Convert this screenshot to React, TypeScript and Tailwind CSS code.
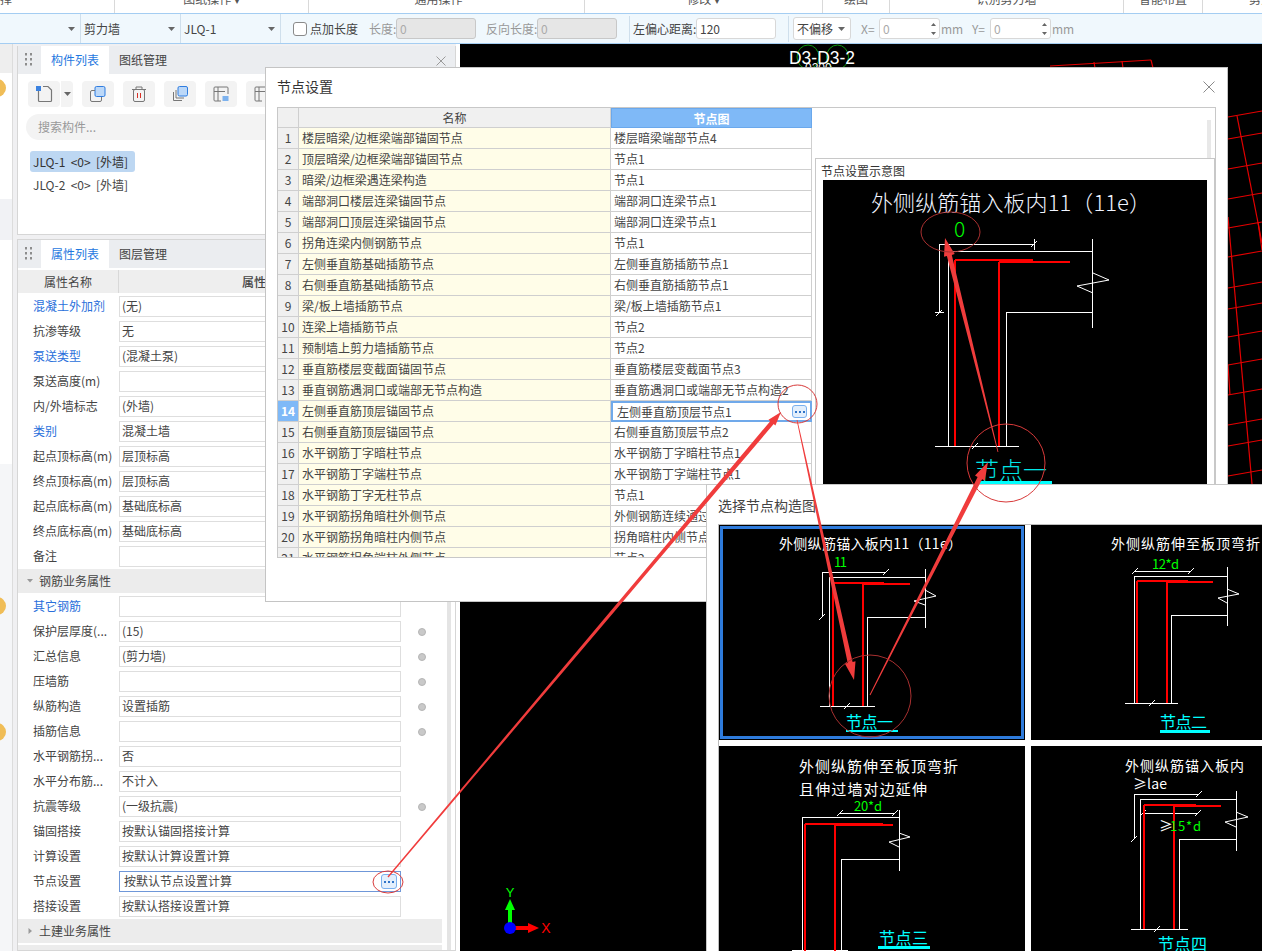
import React from "react";

const FONT = "font-['Noto_Sans_CJK_SC','Liberation_Sans',sans-serif]";
const CJK = "'Noto Sans CJK SC','Liberation Sans',sans-serif";

const NODE_ROWS: [string, string][] = [
  ["楼层暗梁/边框梁端部锚固节点", "楼层暗梁端部节点4"],
  ["顶层暗梁/边框梁端部锚固节点", "节点1"],
  ["暗梁/边框梁遇连梁构造", "节点1"],
  ["端部洞口楼层连梁锚固节点", "端部洞口连梁节点1"],
  ["端部洞口顶层连梁锚固节点", "端部洞口连梁节点1"],
  ["拐角连梁内侧钢筋节点", "节点1"],
  ["左侧垂直筋基础插筋节点", "左侧垂直筋插筋节点1"],
  ["右侧垂直筋基础插筋节点", "右侧垂直筋插筋节点1"],
  ["梁/板上墙插筋节点", "梁/板上墙插筋节点1"],
  ["连梁上墙插筋节点", "节点2"],
  ["预制墙上剪力墙插筋节点", "节点2"],
  ["垂直筋楼层变截面锚固节点", "垂直筋楼层变截面节点3"],
  ["垂直钢筋遇洞口或端部无节点构造", "垂直筋遇洞口或端部无节点构造2"],
  ["左侧垂直筋顶层锚固节点", "左侧垂直筋顶层节点1"],
  ["右侧垂直筋顶层锚固节点", "右侧垂直筋顶层节点2"],
  ["水平钢筋丁字暗柱节点", "水平钢筋丁字暗柱节点1"],
  ["水平钢筋丁字端柱节点", "水平钢筋丁字端柱节点1"],
  ["水平钢筋丁字无柱节点", "节点1"],
  ["水平钢筋拐角暗柱外侧节点", "外侧钢筋连续通过节点1"],
  ["水平钢筋拐角暗柱内侧节点", "拐角暗柱内侧节点1"],
  ["水平钢筋拐角端柱外侧节点", "节点2"],
];

type P = { label: string; value?: string; blue?: boolean; dot?: boolean; focus?: boolean };

const PROPS_A: P[] = [
  { label: "混凝土外加剂", value: "(无)", blue: true },
  { label: "抗渗等级", value: "无" },
  { label: "泵送类型", value: "(混凝土泵)", blue: true },
  { label: "泵送高度(m)" },
  { label: "内/外墙标志", value: "(外墙)" },
  { label: "类别", value: "混凝土墙", blue: true },
  { label: "起点顶标高(m)", value: "层顶标高" },
  { label: "终点顶标高(m)", value: "层顶标高" },
  { label: "起点底标高(m)", value: "基础底标高" },
  { label: "终点底标高(m)", value: "基础底标高" },
  { label: "备注" },
];

const PROPS_B: P[] = [
  { label: "其它钢筋", blue: true },
  { label: "保护层厚度(...", value: "(15)", dot: true },
  { label: "汇总信息", value: "(剪力墙)", dot: true },
  { label: "压墙筋", dot: true },
  { label: "纵筋构造", value: "设置插筋", dot: true },
  { label: "插筋信息", dot: true },
  { label: "水平钢筋拐...", value: "否" },
  { label: "水平分布筋...", value: "不计入" },
  { label: "抗震等级", value: "(一级抗震)", dot: true },
  { label: "锚固搭接", value: "按默认锚固搭接计算" },
  { label: "计算设置", value: "按默认计算设置计算" },
  { label: "节点设置", value: "按默认节点设置计算", focus: true },
  { label: "搭接设置", value: "按默认搭接设置计算" },
];

function DotsButton({ className }: { className: string }) {
  return (
    <span className={`flex items-center justify-center gap-[2px] rounded-[3px] border border-[#7ab0ee] bg-[#e3effc] ${className}`}>
      <i className="block w-[2px] h-[2px] bg-[#2f74c8]" />
      <i className="block w-[2px] h-[2px] bg-[#2f74c8]" />
      <i className="block w-[2px] h-[2px] bg-[#2f74c8]" />
    </span>
  );
}

function PropRow({ p }: { p: P }) {
  return (
    <div className="flex items-center h-[21px] mb-[4px]">
      <div className={`w-[101px] pl-[15px] pb-[2px] whitespace-nowrap text-[12px] leading-[19px] ${p.blue ? "text-[#2a6fdb]" : "text-[#444]"}`}>
        {p.label}
      </div>
      <div
        className={`flex items-center justify-between w-[282px] h-[21px] border text-[12px] leading-[19px] text-[#444] bg-white ${
          p.focus ? "border-[#6f97d8] pl-[4px] pr-[3px]" : "border-[#dedede] pl-[2px]"
        }`}
      >
        <span className="pb-[2px] whitespace-nowrap">{p.value ?? ""}</span>
        {p.focus && <DotsButton className="w-[16px] h-[15px]" />}
      </div>
      <div className="w-[41px] flex justify-center">
        {p.dot && <span className="block w-[8px] h-[8px] rounded-full bg-[#c9c9c9] border border-[#b5b5b5]" />}
      </div>
    </div>
  );
}

function Section({ label, open, className }: { label: string; open?: boolean; className: string }) {
  return (
    <div className={`flex items-center h-[24px] bg-[#ececec] text-[12px] text-[#444] ${className}`}>
      <svg width="21" height="10" viewBox="0 0 21 10" className="shrink-0">
        {open ? <path d="M9 3h6l-3 3.5z" fill="#999" /> : <path d="M10.5 2v6l3.5-3z" fill="#999" />}
      </svg>
      {label}
    </div>
  );
}

function Grip() {
  return (
    <svg width="7" height="14" viewBox="0 0 7 14" className="shrink-0">
      {[0, 5, 10].map((y) => (
        <g key={y} fill="#8d8d8d">
          <rect x="0" y={y} width="2" height="2.5" />
          <rect x="5" y={y} width="2" height="2.5" />
        </g>
      ))}
    </svg>
  );
}

function PanelHeader({ active, other, close }: { active: string; other: string; close?: boolean }) {
  return (
    <div className="flex items-stretch h-[28px] bg-[#ebedf0] text-[12px]">
      <div className="flex items-center w-[23px] pl-[7px]">
        <Grip />
      </div>
      <div className="flex items-center justify-center w-[68px] bg-white text-[#1f78e0]">{active}</div>
      <div className="flex items-center pl-[10px] text-[#444]">{other}</div>
      {close && (
        <svg width="10" height="10" viewBox="0 0 10 10" className="ml-auto mr-[9px] mt-[10px]">
          <path d="M.5.5l9 9M9.5.5l-9 9" stroke="#9a9a9a" strokeWidth="1" />
        </svg>
      )}
    </div>
  );
}

function ToolBtn({ children }: { children: React.ReactNode }) {
  return <div className="flex items-center justify-center w-[32px] h-[26px] rounded-[4px] bg-[#f3f3f3]">{children}</div>;
}

function TinyCaret({ className = "" }: { className?: string }) {
  return (
    <svg width="7" height="4" viewBox="0 0 7 4" className={className}>
      <path d="M0 0h7L3.5 4z" fill="#666" />
    </svg>
  );
}

function Spin() {
  return (
    <svg width="5" height="14" viewBox="0 0 5 14" className="shrink-0">
      <path d="M2.5 1L5 4H0zM2.5 13L0 10h5z" fill="#666" />
    </svg>
  );
}

function NumBox() {
  return (
    <div className="flex items-center justify-between w-[61px] h-[21px] ml-[1px] pl-[3px] pr-[3px] rounded-[3px] border border-[#d8d8d8] bg-white text-[#aaa]">
      0
      <Spin />
    </div>
  );
}

const Disabled = ({ w }: { w: string }) => (
  <div className={`h-[21px] rounded-[3px] border border-[#c8c8c8] bg-[#e6e6e6] pl-[3px] leading-[19px] text-[#aaa] ${w}`}>0</div>
);

/* ---------- CAD drawing helpers ---------- */
type Seg = [number, number, number, number];
type T = { x: number; y: number; s: string; size: number; fill: string; len?: number; w?: number };

function Tick({ x, y }: { x: number; y: number }) {
  return (
    <g stroke="#fff" strokeWidth="1" fill="none">
      <path d={`M${x - 3} ${y + 3}L${x + 3} ${y - 3}`} />
    </g>
  );
}

function Cad({
  box,
  white,
  red,
  redW = 2.5,
  ticks = [],
  zig,
  texts,
  under,
}: {
  box: [number, number, number, number];
  white: Seg[];
  red: Seg[];
  redW?: number;
  ticks?: [number, number][];
  zig: string;
  texts: T[];
  under?: [number, number, number, number];
}) {
  return (
    <svg className="block w-full h-full" viewBox={box.join(" ")} preserveAspectRatio="none">
      <g stroke="#fff" strokeWidth="1" shapeRendering="crispEdges">
        {white.map((s, i) => (
          <line key={i} x1={s[0]} y1={s[1]} x2={s[2]} y2={s[3]} />
        ))}
      </g>
      <polyline points={zig} fill="none" stroke="#fff" strokeWidth="1" />
      {ticks.map((t, i) => (
        <Tick key={i} x={t[0]} y={t[1]} />
      ))}
      <g stroke="#ff0000" strokeWidth={redW} shapeRendering="crispEdges">
        {red.map((s, i) => (
          <line key={i} x1={s[0]} y1={s[1]} x2={s[2]} y2={s[3]} />
        ))}
      </g>
      {texts.map((t, i) => (
        <text
          key={i}
          x={t.x}
          y={t.y}
          fontSize={t.size}
          fill={t.fill}
          fontFamily={CJK}
          fontWeight={t.w ?? 400}
          dominantBaseline="central"
          textLength={t.len}
          lengthAdjust="spacing"
        >
          {t.s}
        </text>
      ))}
      {under && <rect x={under[0]} y={under[1]} width={under[2]} height={under[3]} fill="#00ffff" />}
    </svg>
  );
}

function arrow(tail: [number, number], tip: [number, number], w0: number, w1: number, hw: number, hl: number) {
  const dx = tip[0] - tail[0];
  const dy = tip[1] - tail[1];
  const len = Math.hypot(dx, dy);
  const ux = dx / len;
  const uy = dy / len;
  const nx = -uy;
  const ny = ux;
  const bx = tip[0] - ux * hl;
  const by = tip[1] - uy * hl;
  const pts = [
    [tail[0] + (nx * w0) / 2, tail[1] + (ny * w0) / 2],
    [bx + (nx * w1) / 2, by + (ny * w1) / 2],
    [bx + (nx * hw) / 2, by + (ny * hw) / 2],
    tip,
    [bx - (nx * hw) / 2, by - (ny * hw) / 2],
    [bx - (nx * w1) / 2, by - (ny * w1) / 2],
    [tail[0] - (nx * w0) / 2, tail[1] - (ny * w0) / 2],
  ];
  return pts.map((p) => `${p[0].toFixed(1)},${p[1].toFixed(1)}`).join(" ");
}

const GRID_LINES: Seg[] = [
  [1228, 117, 1262, 111],
  [1228, 139, 1262, 133],
  [1228, 169, 1262, 163],
  [1228, 199, 1262, 193],
  [1228, 228, 1262, 222],
  [1228, 257, 1262, 251],
  [1228, 288, 1262, 282],
  [1228, 309, 1262, 303],
  [1228, 337, 1262, 331],
  [1228, 365, 1262, 359],
  [1228, 395, 1262, 389],
  [1228, 425, 1262, 419],
  [1228, 446, 1262, 440],
  [1228, 476, 1262, 470],
  [1237, 116, 1262, 243],
  [1228, 217, 1252, 484],
  [1258, 222, 1262, 250],
  [1228, 365, 1230, 395],
  [1050, 66, 1151, 60],
  [1151, 60, 1153, 68],
  [1094, 62, 1095, 68],
  [1122, 61, 1123, 68],
];

export default function App() {
  return (
    <div className={`relative flex flex-col w-[1262px] h-[951px] overflow-hidden bg-white text-[12px] text-[#444] ${FONT}`}>
      {/* Ribbon group labels, cut off at the top edge */}
      <div className="flex h-[13px] overflow-hidden text-[12px] leading-[12px] text-[#555]">
        <div className="shrink-0 w-[115px] border-r border-[#d9d9d9]">
          <span className="block -mt-[7px] -ml-[12px]">选择</span>
        </div>
        <div className="shrink-0 w-[194px] border-r border-[#d9d9d9] text-center">
          <span className="block -mt-[7px]">图纸操作 ▾</span>
        </div>
        <div className="shrink-0 w-[276px] border-r border-[#d9d9d9] text-center">
          <span className="block -mt-[7px] pr-[16px]">通用操作</span>
        </div>
        <div className="shrink-0 w-[238px] border-r border-[#d9d9d9] text-center">
          <span className="block -mt-[7px]">修改 ▾</span>
        </div>
        <div className="shrink-0 w-[67px] border-r border-[#d9d9d9] text-center">
          <span className="block -mt-[7px]">绘图</span>
        </div>
        <div className="shrink-0 w-[234px] border-r border-[#d9d9d9] text-center">
          <span className="block -mt-[7px]">识别剪力墙</span>
        </div>
        <div className="shrink-0 w-[79px] border-r border-[#d9d9d9] text-center">
          <span className="block -mt-[7px]">智能布置</span>
        </div>
        <div className="flex-1 min-w-0 overflow-hidden pl-[46px]">
          <span className="block -mt-[7px] whitespace-nowrap">剪力</span>
        </div>
      </div>

      {/* Property toolbar */}
      <div className="flex items-center h-[31px] border-y border-[#a4cdf2] bg-[#f0f8fd] text-[12px] text-[#444] whitespace-nowrap">
        <div className="flex items-center justify-end w-[81px] h-full border-r border-[#cfdfec] pr-[5px]">
          <TinyCaret />
        </div>
        <div className="flex items-center justify-between w-[100px] h-full border-r border-[#cfdfec] pl-[3px] pr-[5px]">
          剪力墙
          <TinyCaret />
        </div>
        <div className="flex items-center justify-between w-[100px] h-full border-r border-[#cfdfec] pl-[3px] pr-[5px]">
          JLQ-1
          <TinyCaret />
        </div>
        <div className="ml-[12px] w-[14px] h-[14px] rounded-[3px] border border-[#8a8a8a] bg-white" />
        <span className="ml-[3px] w-[48px]">点加长度</span>
        <span className="ml-[11px] w-[27px] text-[#999]">长度:</span>
        <Disabled w="w-[80px]" />
        <span className="ml-[10px] w-[51px] text-[#999]">反向长度:</span>
        <Disabled w="w-[80px]" />
        <div className="ml-[12px] w-px h-[26px] bg-[#cfdfec]" />
        <span className="ml-[3px] w-[63px]">左偏心距离:</span>
        <div className="w-[80px] h-[21px] rounded-[3px] border border-[#d8d8d8] bg-white pl-[3px] leading-[19px]">120</div>
        <div className="ml-[12px] w-px h-[26px] bg-[#cfdfec]" />
        <div className="flex items-center justify-between ml-[4px] w-[58px] h-[23px] pl-[3px] pr-[5px] rounded-[3px] border border-[#d8d8d8] bg-white">
          不偏移
          <TinyCaret />
        </div>
        <span className="ml-[10px] w-[17px] text-[#999]">X=</span>
        <NumBox />
        <span className="ml-[1px] w-[31px] text-[#999]">mm</span>
        <span className="w-[17px] text-[#999]">Y=</span>
        <NumBox />
        <span className="ml-[1px] text-[#999]">mm</span>
      </div>

      {/* Work area */}
      <div className="flex flex-1 min-h-0">
        {/* Left rail */}
        <div className="flex flex-col w-[13px] border-r border-[#dcdcdc] bg-white">
          <div className="h-[29px] bg-[#eeeeee]" />
          <div className="relative h-[126px]">
            <span className="absolute -left-[12px] top-[6px] w-[18px] h-[18px] rounded-full bg-[#f0bd57]" />
          </div>
          <div className="h-[41px] bg-[#f1f2f5]" />
          <div className="h-[224px]" />
          <div className="relative flex-1 bg-[#f5f6f8]">
            <span className="absolute -left-[12px] top-[133px] w-[18px] h-[18px] rounded-full bg-[#f0bd57]" />
            <span className="absolute -left-[12px] top-[259px] w-[18px] h-[18px] rounded-full bg-[#f0bd57]" />
          </div>
        </div>

        {/* Panels */}
        <div className="flex flex-col w-[443px] pt-[2px] bg-[#f0f0f2]">
          <div className="ml-[4px] h-[189px] border border-t-0 border-[#d6d6d6] bg-white">
            <PanelHeader active="构件列表" other="图纸管理" close />
            <div className="flex items-center gap-[9px] mt-[7px] ml-[10px]">
              <div className="flex">
                <ToolBtn>
                  <svg width="18" height="18" viewBox="0 0 18 18" fill="none">
                    <path d="M3.5 5v10.5a1 1 0 0 0 1 1h11a1 1 0 0 0 1-1V5l-3.5-3.5H8" stroke="#777" strokeWidth="1.2" />
                    <rect x="1" y="1" width="5" height="5" fill="#3b82e0" />
                  </svg>
                </ToolBtn>
                <div className="flex items-center justify-center w-[12px] h-[26px] ml-px rounded-r-[4px] bg-[#f3f3f3]">
                  <TinyCaret />
                </div>
              </div>
              <ToolBtn>
                <svg width="18" height="18" viewBox="0 0 18 18" fill="none">
                  <rect x="6" y="1.5" width="10" height="10" rx="1.5" fill="#bcd8f8" stroke="#2f7de0" />
                  <path d="M6 5.5H3a1.5 1.5 0 0 0-1.5 1.5v8A1.5 1.5 0 0 0 3 16.500h8a1.500 1.500 0 0 0 1.500-1.500v-3" stroke="#777" />
                </svg>
              </ToolBtn>
              <ToolBtn>
                <svg width="18" height="18" viewBox="0 0 18 18" fill="none">
                  <path d="M2 4.500h14M6 4.500V2h6v2.500" stroke="#777" />
                  <rect x="3.500" y="4.500" width="11" height="12" rx="1.500" stroke="#777" />
                  <path d="M7.500 8v5M10.500 8v5" stroke="#d93025" />
                </svg>
              </ToolBtn>
              <ToolBtn>
                <svg width="18" height="18" viewBox="0 0 18 18" fill="none">
                  <rect x="7" y="1.500" width="9.500" height="9.500" rx="1.500" fill="#bcd8f8" stroke="#2f7de0" />
                  <path d="M5 5v8h8M2.500 7v8.500H11" stroke="#777" />
                </svg>
              </ToolBtn>
              <ToolBtn>
                <svg width="18" height="18" viewBox="0 0 18 18" fill="none">
                  <path d="M16 9V3a1 1 0 0 0-1-1H3a1 1 0 0 0-1 1v12a1 1 0 0 0 1 1h6" stroke="#777" />
                  <path d="M2 6.500h11M6 2v14" stroke="#777" />
                  <rect x="10.500" y="11" width="6" height="5" fill="#7db2ee" />
                </svg>
              </ToolBtn>
              <ToolBtn>
                <svg width="18" height="18" viewBox="0 0 18 18" fill="none">
                  <path d="M16 9V3a1 1 0 0 0-1-1H3a1 1 0 0 0-1 1v12a1 1 0 0 0 1 1h6" stroke="#777" />
                  <path d="M2 6.500h11M6 2v14" stroke="#777" />
                </svg>
              </ToolBtn>
            </div>
            <div className="flex items-center h-[26px] mt-[7px] ml-[8px] mr-[8px] pl-[12px] rounded-full bg-[#f3f3f3] text-[#999]">搜索构件...</div>
            <div className="mt-[11px] ml-[12px] w-[105px] h-[21px] rounded-[3px] bg-[#bdd7f2] pl-[3px] leading-[21px] whitespace-pre text-[#333]">JLQ-1  &lt;0&gt;  [外墙]</div>
            <div className="mt-[2px] ml-[15px] leading-[21px] whitespace-pre text-[#444]">JLQ-2  &lt;0&gt;  [外墙]</div>
          </div>

          <div className="ml-[4px] mt-[4px] flex-1 min-h-0 border border-[#d6d6d6] bg-white overflow-hidden">
            <PanelHeader active="属性列表" other="图层管理" />
            <div className="flex mt-[2px] h-[23px] w-[424px] bg-[#eeeeee] text-[#444] leading-[23px]">
              <div className="w-[101px] border-r border-[#d8d8d8] text-center">属性名称</div>
              <div className="w-[282px] text-center font-medium">属性值</div>
            </div>
            <div className="flex">
              <div className="w-[424px] pt-[3px]">
                {PROPS_A.map((p) => (
                  <PropRow key={p.label} p={p} />
                ))}
                <Section label="钢筋业务属性" open className="-mt-[2px] mb-[3px]" />
                {PROPS_B.map((p) => (
                  <PropRow key={p.label} p={p} />
                ))}
                <Section label="土建业务属性" className="-mt-[2px] mb-[2px]" />
                <div className="h-[24px] bg-[#ececec]" />
              </div>
              <div className="ml-[5px] w-[4px] h-[700px] bg-[#e4e4e4]" />
            </div>
          </div>
        </div>

        {/* CAD canvas */}
        <div className="flex-1 ml-[4px] bg-black">
          <svg className="block w-full h-full" viewBox="460 44 802 907">
            <g stroke="#e60000" strokeWidth="1.200" fill="none">
              {GRID_LINES.map((s, i) => (
                <line key={i} x1={s[0]} y1={s[1]} x2={s[2]} y2={s[3]} />
              ))}
            </g>
            <ellipse cx="808" cy="57" rx="11" ry="12" fill="none" stroke="#0c9a0c" />
            <ellipse cx="837.500" cy="57" rx="11" ry="12" fill="none" stroke="#0c9a0c" />
            <text x="789" y="64" fontSize="19" fill="#fff" fontFamily="'Liberation Sans',sans-serif" textLength="66" lengthAdjust="spacingAndGlyphs">
              D3-D3-2
            </text>
            <text x="805" y="72" fontSize="12" fill="#fff" fontFamily="'Liberation Sans',sans-serif">
              0200
            </text>
            <rect x="508" y="906" width="4" height="20" fill="#00ff00" />
            <path d="M510 899l5 11h-10z" fill="#00ff00" />
            <rect x="514" y="926" width="16" height="4" fill="#ff0000" />
            <path d="M539 928l-11 5v-10z" fill="#ff0000" />
            <circle cx="510" cy="928" r="6" fill="#0000ff" />
            <text x="510" y="897" fontSize="13" fill="#00ff00" textAnchor="middle" fontFamily="'Liberation Sans',sans-serif">
              Y
            </text>
            <text x="546" y="933" fontSize="14" fill="#ff0000" textAnchor="middle" fontFamily="'Liberation Sans',sans-serif">
              X
            </text>
          </svg>
        </div>
      </div>

      {/* Node settings dialog */}
      <div className="absolute left-[265px] top-[67px] w-[963px] h-[535px] border border-[#c4c4c4] bg-white">
        <div className="flex items-center justify-between h-[39px] pb-[2px] pl-[11px] pr-[12px] text-[14px] text-[#333]">
          节点设置
          <svg width="12" height="12" viewBox="0 0 12 12">
            <path d="M.5.5l11 11M11.500.5l-11 11" stroke="#8a8a8a" strokeWidth="1" />
          </svg>
        </div>
        <div className="flex ml-[11px] w-[939px] h-[451px] border border-[#c8c8c8] overflow-hidden">
          <div className="w-[534px] shrink-0 border-r-0">
            <div className="flex h-[20px] leading-[20px]">
              <div className="w-[21px] bg-[#f0f0f0] border-r border-b border-[#cfcfcf]" />
              <div className="w-[312px] bg-[#f0f0f0] border-r border-b border-[#cfcfcf] text-center text-[#444]">名称</div>
              <div className="w-[201px] bg-[#7fb9f7] border border-[#6aa8ec] text-center font-bold text-white">节点图</div>
            </div>
            {NODE_ROWS.map(([name, node], i) => {
              const sel = i === 13;
              return (
                <div key={i} className="flex h-[21px] leading-[20px]">
                  <div
                    className={`w-[21px] shrink-0 border-r border-b border-[#cfcfcf] text-center ${
                      sel ? "bg-[#7fb9f7] text-white font-bold" : "bg-[#f0f0f0] text-[#444]"
                    }`}
                  >
                    {i + 1}
                  </div>
                  <div className="w-[312px] shrink-0 border-r border-b border-[#cfcfcf] bg-[#fffde8] pl-[3px] whitespace-nowrap text-[#444]">{name}</div>
                  {sel ? (
                    <div className="flex items-center justify-between w-[201px] shrink-0 border-2 border-[#70a9ea] pl-[4px] pr-[3px] whitespace-nowrap text-[#444]">
                      {node}
                      <DotsButton className="w-[15px] h-[13px]" />
                    </div>
                  ) : (
                    <div className="w-[201px] shrink-0 border-r border-b border-[#cfcfcf] pl-[3px] whitespace-nowrap text-[#444]">{node}</div>
                  )}
                </div>
              );
            })}
          </div>
          <div className="flex-1 min-w-0 flex flex-col">
            <div className="flex justify-end h-[50px] pt-[12px] pr-[4px]">
              <div className="w-[4px] h-[38px] bg-[#e8e8e8]" />
            </div>
            <div className="ml-[3px] w-[400px] flex-1 border border-[#c8c8c8] pl-[7px]">
              <div className="h-[21px] -ml-[2px] pt-[4px] leading-[16px] text-[#333]">节点设置示意图</div>
              <div className="w-[384px] h-[304px] bg-black">
                <Cad
                  box={[823, 180, 384, 304]}
                  white={[
                    [939, 244, 1034, 244],
                    [939, 244, 939, 313],
                    [1034, 239, 1034, 250],
                    [935, 312, 944, 312],
                    [948, 251, 1092, 251],
                    [948, 251, 948, 446],
                    [1092, 239, 1092, 328],
                    [1006, 312, 1092, 312],
                    [1006, 312, 1006, 446],
                    [935, 446, 1019, 446],
                  ]}
                  red={[
                    [955, 260, 955, 446],
                    [955, 260, 1033, 260],
                    [999, 262, 1070, 262],
                    [999, 262, 999, 446],
                  ]}
                  ticks={[
                    [1034, 244],
                    [939, 313],
                    [975, 446],
                  ]}
                  zig="1093,273 1109,280 1077,286 1093,293"
                  texts={[
                    { x: 871, y: 201, s: "外侧纵筋锚入板内11（11e）", size: 22, fill: "#f0f4ff", len: 280, w: 300 },
                    { x: 954, y: 228, s: "0", size: 21, fill: "#00ff00", w: 300 },
                    { x: 975, y: 468, s: "节点一", size: 24, fill: "#00e6e6", len: 72, w: 300 },
                  ]}
                  under={[978, 481, 74, 3]}
                />
              </div>
            </div>
          </div>
        </div>
      </div>

      {/* Node picker dialog */}
      <div className="absolute left-[706px] top-[484px] w-[556px] h-[467px] border-l border-t border-[#c8c8c8] bg-white">
        <div className="h-[39px] pl-[11px] pt-[10px] text-[14px] leading-[20px] text-[#444]">选择节点构造图</div>
        <div className="ml-[11px] h-[428px] border-l border-t border-[#bdbdbd]">
          <div className="grid grid-cols-[306px_231px] grid-rows-[215px_205px] gap-[6px]">
            <div className="relative bg-black">
              <Cad
                box={[719, 525, 306, 215]}
                white={[
                  [822, 572, 886, 572],
                  [822, 572, 822, 617],
                  [829, 577, 925, 577],
                  [829, 577, 829, 706],
                  [925, 569, 925, 628],
                  [867, 617, 925, 617],
                  [867, 617, 867, 706],
                  [820, 706, 875, 706],
                ]}
                red={[
                  [833, 583, 833, 706],
                  [833, 583, 884, 583],
                  [863, 584, 910, 584],
                  [863, 584, 863, 706],
                ]}
                redW={2}
                ticks={[
                  [886, 572],
                  [822, 617],
                  [847, 706],
                ]}
                zig="925,590 936,596 914,601 925,605"
                texts={[
                  { x: 779, y: 543, s: "外侧纵筋锚入板内11（11e）", size: 14, fill: "#fff", len: 183 },
                  { x: 834, y: 561, s: "11", size: 13, fill: "#00ff00", len: 13 },
                  { x: 846, y: 721, s: "节点一", size: 16, fill: "#00ffff", len: 47 },
                ]}
                under={[846, 730, 52, 2]}
              />
              <div className="absolute inset-[1px] border-[3px] border-[#2e7bdc]" />
            </div>
            <div className="bg-black">
              <Cad
                box={[1031, 525, 231, 215]}
                white={[
                  [1135, 571, 1191, 571],
                  [1134, 576, 1227, 576],
                  [1134, 576, 1134, 703],
                  [1227, 567, 1227, 626],
                  [1171, 615, 1227, 615],
                  [1171, 615, 1171, 703],
                  [1125, 703, 1178, 703],
                ]}
                red={[
                  [1137, 581, 1137, 703],
                  [1137, 581, 1188, 581],
                  [1167, 582, 1213, 582],
                  [1167, 582, 1167, 703],
                ]}
                redW={2}
                ticks={[
                  [1135, 571],
                  [1191, 571],
                  [1152, 703],
                ]}
                zig="1227,589 1239,594 1218,598 1227,603"
                texts={[
                  { x: 1111, y: 543, s: "外侧纵筋伸至板顶弯折", size: 14, fill: "#fff", len: 149 },
                  { x: 1152, y: 563, s: "12*d", size: 13, fill: "#00ff00", len: 27 },
                  { x: 1160, y: 721, s: "节点二", size: 16, fill: "#00ffff", len: 47 },
                ]}
                under={[1160, 730, 50, 3]}
              />
            </div>
            <div className="bg-black">
              <Cad
                box={[719, 746, 306, 205]}
                white={[
                  [840, 813, 895, 813],
                  [802, 817, 899, 817],
                  [802, 817, 802, 951],
                  [899, 810, 899, 871],
                  [841, 859, 899, 859],
                  [841, 859, 841, 951],
                  [792, 950, 848, 950],
                ]}
                red={[
                  [805, 824, 805, 951],
                  [805, 824, 883, 824],
                  [835, 825, 893, 825],
                  [835, 825, 835, 951],
                ]}
                redW={2}
                ticks={[
                  [840, 813],
                  [895, 813],
                ]}
                zig="899,833 910,837 889,842 899,847"
                texts={[
                  { x: 799, y: 765, s: "外侧纵筋伸至板顶弯折", size: 15, fill: "#fff", len: 159 },
                  { x: 799, y: 788, s: "且伸过墙对边延伸", size: 15, fill: "#fff", len: 128 },
                  { x: 854, y: 805, s: "20*d", size: 13, fill: "#00ff00", len: 28 },
                  { x: 879, y: 937, s: "节点三", size: 16, fill: "#00ffff", len: 49 },
                ]}
                under={[878, 946, 52, 3]}
              />
            </div>
            <div className="bg-black">
              <Cad
                box={[1031, 746, 231, 205]}
                white={[
                  [1134, 794, 1199, 794],
                  [1134, 794, 1134, 839],
                  [1140, 799, 1236, 799],
                  [1140, 799, 1140, 929],
                  [1236, 791, 1236, 851],
                  [1143, 813, 1198, 813],
                  [1179, 839, 1236, 839],
                  [1179, 839, 1179, 929],
                  [1131, 929, 1188, 929],
                ]}
                red={[
                  [1144, 805, 1144, 929],
                  [1144, 805, 1196, 805],
                  [1174, 806, 1221, 806],
                  [1174, 806, 1174, 929],
                ]}
                redW={2}
                ticks={[
                  [1199, 794],
                  [1134, 839],
                  [1143, 813],
                  [1198, 813],
                  [1157, 929],
                ]}
                zig="1236,812 1248,817 1225,822 1236,827"
                texts={[
                  { x: 1125, y: 765, s: "外侧纵筋锚入板内", size: 14, fill: "#fff", len: 119 },
                  { x: 1133, y: 783, s: "≥lae", size: 14, fill: "#fff", len: 34 },
                  { x: 1159, y: 825, s: "≥", size: 14, fill: "#fff" },
                  { x: 1170, y: 825, s: "15*d", size: 13, fill: "#00ff00", len: 31 },
                  { x: 1158, y: 943, s: "节点四", size: 16, fill: "#00ffff", len: 49 },
                ]}
              />
            </div>
          </div>
        </div>
      </div>

      {/* Red annotations drawn over the screenshot */}
      <svg className="absolute inset-0 pointer-events-none" width="1262" height="951" viewBox="0 0 1262 951">
        <g fill="#f03c3c">
          <polygon points={arrow([388, 877], [781, 412], 1.2, 4.5, 9, 14)} />
          <polygon points={arrow([797, 420], [854, 680], 0.8, 5, 11, 18)} />
          <polygon points={arrow([870, 695], [988, 462], 0.8, 5, 11, 18)} />
          <polygon points={arrow([998, 452], [945, 238], 0.8, 5, 11, 18)} />
        </g>
        <g fill="none" stroke="#d83a3a" strokeWidth="1">
          <ellipse cx="950.500" cy="232" rx="29.500" ry="20" stroke="#a83030" />
          <circle cx="1006" cy="463" r="39" />
          <circle cx="870" cy="696" r="41" stroke="#a83030" />
          <ellipse cx="797.500" cy="404" rx="19.500" ry="19" />
          <ellipse cx="388" cy="882" rx="15" ry="11" />
        </g>
      </svg>
    </div>
  );
}
